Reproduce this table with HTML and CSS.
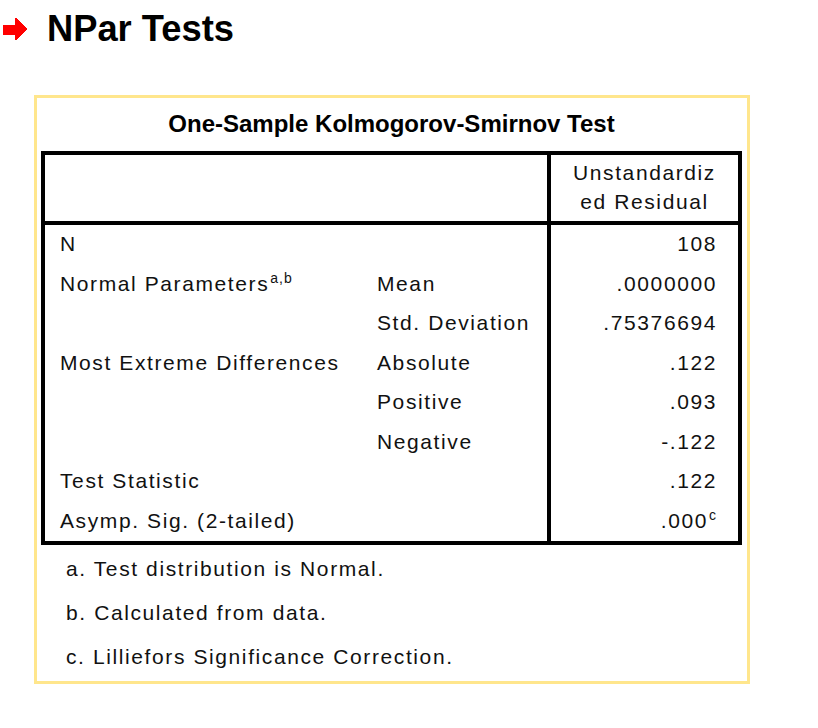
FILE: index.html
```html
<!DOCTYPE html>
<html>
<head>
<meta charset="utf-8">
<link rel="stylesheet" href="styles.css">
</head>
<body>
<div class="heading">
  <svg class="arrow" width="30" height="28" viewBox="0 0 30 28">
    <polygon fill="#ff0000" points="3,10 15,10 15,3 17,3 17,4 18,4 18,5 19,5 19,6 20,6 20,7 21,7 21,8 22,8 22,9 23,9 23,10 24,10 24,11 25,11 25,12 26,12 26,13 27,13 27,14 27,15 26,15 26,16 25,16 25,17 24,17 24,18 23,18 23,19 22,19 22,20 21,20 21,21 20,21 20,22 19,22 19,23 18,23 18,24 17,24 17,25 15,25 15,20 3,20"/>
  </svg>
  <h1 class="heading-text">NPar Tests</h1>
</div>

<div class="box">
  <div class="title">One-Sample Kolmogorov-Smirnov Test</div>
  <div class="kstable">
    <div class="hd-blank"></div>
    <div class="hd-val">Unstandardiz<br>ed Residual</div>

    <div class="c1">N</div><div class="c2"></div><div class="c3">108</div>
    <div class="c1">Normal Parameters<sup>a,b</sup></div><div class="c2">Mean</div><div class="c3">.0000000</div>
    <div class="c1"></div><div class="c2">Std. Deviation</div><div class="c3">.75376694</div>
    <div class="c1">Most Extreme Differences</div><div class="c2">Absolute</div><div class="c3">.122</div>
    <div class="c1"></div><div class="c2">Positive</div><div class="c3">.093</div>
    <div class="c1"></div><div class="c2">Negative</div><div class="c3">-.122</div>
    <div class="c1">Test Statistic</div><div class="c2"></div><div class="c3">.122</div>
    <div class="c1">Asymp. Sig. (2-tailed)</div><div class="c2"></div><div class="c3">.000<sup>c</sup></div>
  </div>
  <div class="notes">
    <div class="note">a. Test distribution is Normal.</div>
    <div class="note">b. Calculated from data.</div>
    <div class="note">c. Lilliefors Significance Correction.</div>
  </div>
</div>
</body>
</html>
```

FILE: styles.css
```css
html, body {
  margin: 0;
  padding: 0;
  background: #ffffff;
}

body {
  font-family: "Liberation Sans", Arial, sans-serif;
  color: #000;
}

.heading {
  display: flex;
  align-items: center;
  height: 40px;
  margin-top: 9px;
}

.arrow {
  display: block;
  width: 30px;
  height: 28px;
}

.heading-text {
  margin: 0 0 0 17px;
  font-size: 36.3px;
  font-weight: bold;
  line-height: 40px;
  color: #000;
}

.box {
  box-sizing: border-box;
  margin: 46px 0 0 34px;
  width: 716px;
  height: 589px;
  border: 3px solid #ffe68c;
  padding: 12px 0 0 4px;
}

.title {
  font-size: 24px;
  font-weight: bold;
  line-height: 28px;
  text-align: center;
  width: 701px;
}

.kstable {
  box-sizing: border-box;
  margin-top: 13px;
  width: 701px;
  display: grid;
  grid-template-columns: 317px 185px 191px;
  border: 4px solid #000;
  font-size: 21px;
  letter-spacing: 1.6px;
  color: #111;
}

.hd-blank {
  grid-column: 1 / 3;
  border-bottom: 4px solid #000;
  height: 70px;
  box-sizing: border-box;
}

.hd-val {
  box-sizing: border-box;
  height: 70px;
  border-left: 4px solid #000;
  border-bottom: 4px solid #000;
  text-align: center;
  line-height: 29px;
  padding-top: 3px;
}

.c1, .c2, .c3 {
  height: 39.5px;
  line-height: 37px;
  white-space: nowrap;
}

.c1 {
  padding-left: 15px;
}

.c2 {
  padding-left: 15px;
}

.c3 {
  box-sizing: border-box;
  border-left: 4px solid #000;
  text-align: right;
  padding-right: 21px;
}

sup {
  font-size: 14px;
  line-height: 0;
  vertical-align: 8px;
  letter-spacing: 1px;
  margin-left: 1px;
}

.notes {
  margin-top: 2px;
  padding-left: 25px;
  font-size: 21px;
  letter-spacing: 1.6px;
  color: #111;
}

.note {
  line-height: 44px;
  white-space: nowrap;
}
```
